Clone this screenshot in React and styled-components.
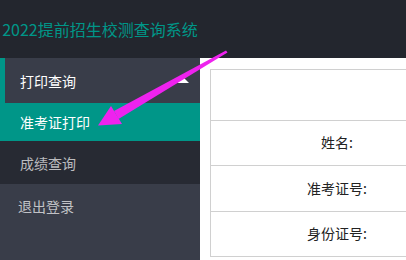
import styled, { createGlobalStyle } from 'styled-components';

const GlobalStyle = createGlobalStyle`
        html, body {
                margin: 0;
                padding: 0;
                background: #fff;
        }
        body {
                font-family: "Noto Sans CJK SC", "Noto Sans", sans-serif;
                width: 406px;
                height: 260px;
                overflow: hidden;
        }
`;

const Page = styled.div`
        position: relative;
        display: flex;
        flex-direction: column;
        width: 406px;
        height: 260px;
        overflow: hidden;
`;

const Header = styled.header`
        display: flex;
        align-items: center;
        height: 58px;
        flex-shrink: 0;
        background-color: #23262e;
`;

const Logo = styled.div`
        width: 200px;
        text-align: center;
        font-size: 16px;
        line-height: 58px;
        color: #009688;
        white-space: nowrap;
`;

const Body = styled.div`
        display: flex;
        flex: 1;
        min-height: 0;
`;

const Side = styled.nav`
        width: 200px;
        flex-shrink: 0;
        background-color: #393d49;
`;

const NavParent = styled.div`
        display: flex;
        align-items: center;
        justify-content: space-between;
        height: 45px;
        padding: 0 11px 0 15px;
        border-left: 5px solid #009688;
        font-size: 14px;
        color: #fff;
`;

const Caret = styled.span`
        width: 0;
        height: 0;
        margin-top: -2px;
        border-style: solid;
        border-width: 0 6px 6px;
        border-color: transparent transparent #fff;
`;

const NavChildren = styled.div`
        background-color: rgba(0, 0, 0, 0.3);
`;

const NavItem = styled.div`
        display: flex;
        align-items: center;
        height: ${({ $h }) => $h}px;
        padding-left: ${({ $pad = 20 }) => $pad}px;
        font-size: 14px;
        color: ${({ $active }) => ($active ? '#fff' : 'rgba(255, 255, 255, 0.7)')};
        background-color: ${({ $active }) => ($active ? '#009688' : 'transparent')};
`;

const Main = styled.main`
        flex: 1;
        padding: 11px 0 0 10px;
        overflow: hidden;
        background: #fff;
`;

const Table = styled.div`
        width: 600px;
        border-top: 1px solid #d0d0d0;
        border-left: 1px solid #d0d0d0;
`;

const Row = styled.div`
        display: flex;
        height: ${({ $h }) => $h}px;
        border-bottom: 1px solid #d0d0d0;
`;

const Label = styled.div`
        display: flex;
        align-items: center;
        justify-content: center;
        width: 252px;
        padding-bottom: 2px;
        font-size: 14px;
        color: #222;
`;

const Arrow = styled.svg`
        position: absolute;
        left: 0;
        top: 0;
        pointer-events: none;
`;

const rows = [
        { label: '姓名:', h: 44 },
        { label: '准考证号:', h: 45 },
        { label: '身份证号:', h: 44 },
];

const App = () => (
        <Page>
                <GlobalStyle />
                <Header>
                        <Logo>2022提前招生校测查询系统</Logo>
                </Header>
                <Body>
                        <Side>
                                <NavParent>
                                        打印查询
                                        <Caret />
                                </NavParent>
                                <NavChildren>
                                        <NavItem $h={38} $active>准考证打印</NavItem>
                                        <NavItem $h={43}>成绩查询</NavItem>
                                </NavChildren>
                                <NavItem $h={44} $pad={18}>退出登录</NavItem>
                        </Side>
                        <Main>
                                <Table>
                                        <Row $h={50} />
                                        {rows.map((r) => (
                                                <Row key={r.label} $h={r.h}>
                                                        <Label>{r.label}</Label>
                                                </Row>
                                        ))}
                                </Table>
                        </Main>
                </Body>
                <Arrow width="406" height="260" viewBox="0 0 406 260">
                        <polygon points="114,111 226,50.5 227.5,52.5 118.5,119" fill="#ee22ee" />
                        <polygon points="98,125.5 111,106 122,124" fill="#ee22ee" />
                </Arrow>
        </Page>
);

export default App;
